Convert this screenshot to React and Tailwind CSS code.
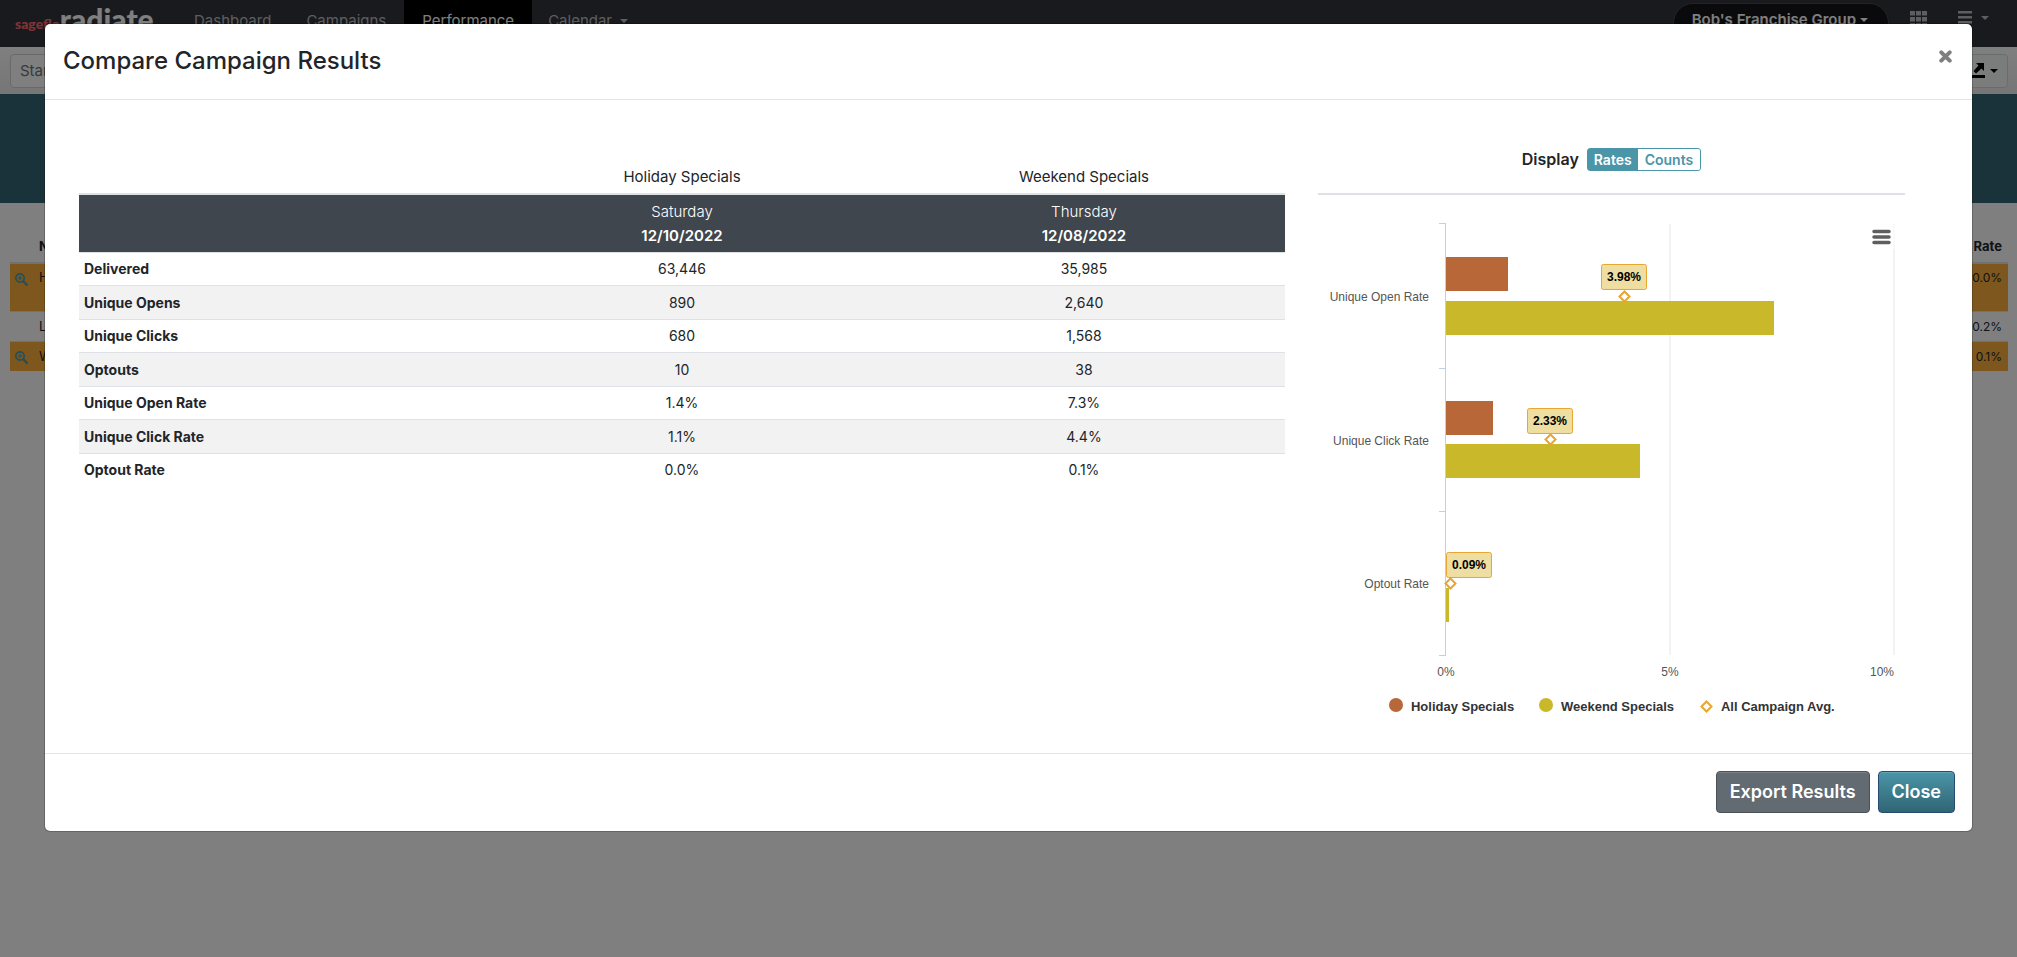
import React from "react";

const metrics = [
  ["Delivered", "63,446", "35,985"],
  ["Unique Opens", "890", "2,640"],
  ["Unique Clicks", "680", "1,568"],
  ["Optouts", "10", "38"],
  ["Unique Open Rate", "1.4%", "7.3%"],
  ["Unique Click Rate", "1.1%", "4.4%"],
  ["Optout Rate", "0.0%", "0.1%"],
];

const chartRows = [
  { label: "Unique Open Rate", labelY: 106, holiday: { y: 62, w: 62 }, weekend: { y: 106, w: 328 }, avg: { text: "3.98%", x: 306, y: 101, boxX: 283, boxY: 69 } },
  { label: "Unique Click Rate", labelY: 250, holiday: { y: 206, w: 47 }, weekend: { y: 249, w: 194 }, avg: { text: "2.33%", x: 232, y: 244, boxX: 209, boxY: 213 } },
  { label: "Optout Rate", labelY: 393, holiday: { y: 350, w: 0 }, weekend: { y: 393, w: 3 }, avg: { text: "0.09%", x: 132, y: 388, boxX: 128, boxY: 357 } },
];

function Caret({ className = "" }) {
  return (
    <svg viewBox="0 0 8 4" className={`h-1 w-2 shrink-0 ${className}`} fill="currentColor" aria-hidden="true">
      <path d="M0 0h8L4 4z" />
    </svg>
  );
}

function ZoomIcon() {
  return (
    <svg viewBox="0 0 13 13" className="size-[13px]" fill="none" stroke="#4a9fb4" aria-hidden="true">
      <circle cx="5" cy="5" r="4.200" strokeWidth="1.700" />
      <path d="M8.200 8.200l3.600 3.600" strokeWidth="2.400" strokeLinecap="round" />
      <path d="M5 2.800v4.400M2.800 5h4.400" strokeWidth="1.200" />
    </svg>
  );
}

function Navbar() {
  return (
    <header className="flex h-[47px] items-start overflow-hidden bg-[#32343b] text-base text-[#bcbdc0]">
      <a href="#home" className="flex w-[167px] shrink-0 items-start pl-[15px]">
        <span className="mt-[14px] font-[Lato] text-[14px] leading-5 font-black text-[#ff666e]">sageflo</span>
        <span className="font-[Lato] text-[30px] leading-[38px] font-black text-white">radiate</span>
      </a>
      <nav className="flex h-full items-start text-[15px] leading-[42px]">
        <a href="#dashboard" className="px-[27px]">Dashboard</a>
        <a href="#campaigns" className="px-2">Campaigns</a>
        <a href="#performance" className="ml-[10px] h-full bg-black px-[18px] text-white">Performance</a>
        <a href="#calendar" className="flex items-center gap-2 px-4">Calendar <Caret /></a>
      </nav>
      <button type="button" className="mt-[3px] ml-auto flex h-10 items-center gap-1 rounded-full border border-[#44464d] bg-[#141518] pr-5 pb-[6px] pl-[18px] text-[15px] font-semibold text-white">
        Bob's Franchise Group <Caret />
      </button>
      <button type="button" aria-label="Apps" className="mt-[11px] ml-[21px]">
        <svg viewBox="0 0 17 17" className="size-[17px]" fill="currentColor">
          {[0, 6, 12].map((x) => [0, 6, 12].map((y) => <rect key={`${x}-${y}`} x={x} y={y} width="5" height="4.500" />))}
        </svg>
      </button>
      <button type="button" aria-label="Menu" className="mt-[11px] mr-7 ml-[31px] flex items-center gap-[9px]">
        <svg viewBox="0 0 14 14" className="size-[14px]" fill="currentColor">
          <path d="M0 0h14v2.500H0zM0 5h14v2.500H0zM0 10h14v2.500H0z" />
        </svg>
        <Caret />
      </button>
    </header>
  );
}

function PageBehind() {
  return (
    <div className="flex min-h-screen flex-col bg-white">
      <Navbar />
      <div className="flex h-[47px] items-center justify-between bg-gradient-to-b from-white to-[#ececec] pr-[9px] pl-[10px]">
        <input aria-label="Start date" placeholder="Start Date" className="h-[34px] w-40 rounded border border-[#ced4da] bg-white px-[9px] text-[15px] placeholder:text-[#6c757d]" />
        <button type="button" aria-label="Share" className="flex h-[34px] items-center gap-[5px] rounded border border-[#d0dcdc] bg-[#f6f8f8] px-[9px] text-black">
          <svg viewBox="0 0 16 15" className="h-[15px] w-4" aria-hidden="true">
            <path d="M0 12h16v3H0zM7 0h8v8l-2.500-2.500-5.500 5-2.500-2.500 5-5.500z" fill="currentColor" />
          </svg>
          <Caret />
        </button>
      </div>
      <div className="h-[109px] bg-[#346674]" />
      <div className="pt-[27px] pr-[9px] pl-[10px]">
        <table className="w-full border-separate border-spacing-0 text-[13px] text-[#212529]">
          <thead>
            <tr className="h-[34px]">
              <th className="w-[29px] border-b-2 border-[#dee2e6]" />
              <th className="border-b-2 border-[#dee2e6] pt-[2px] text-left font-bold">Name</th>
              <th className="border-b-2 border-[#dee2e6] pt-[2px] pr-[6px] text-right font-bold">Optout Rate</th>
            </tr>
          </thead>
          <tbody>
            <tr className="h-[47px] bg-[#fbaf3c] align-top">
              <td className="pt-[9px] pl-[5px]"><ZoomIcon /></td>
              <td className="pt-1">Holiday Specials</td>
              <td className="pt-1 pr-[6px] text-right text-xs leading-5">0.0%</td>
            </tr>
            <tr className="h-[31px]">
              <td className="border-y border-[#dee2e6]" />
              <td className="border-y border-[#dee2e6]">Last Chance</td>
              <td className="border-y border-[#dee2e6] pr-[6px] text-right text-xs leading-5">0.2%</td>
            </tr>
            <tr className="h-[29px] bg-[#fbaf3c]">
              <td className="pt-[2px] pl-[5px]"><ZoomIcon /></td>
              <td>Weekend Specials</td>
              <td className="pr-[6px] text-right text-xs leading-5">0.1%</td>
            </tr>
          </tbody>
        </table>
      </div>
    </div>
  );
}

function ResultsTable() {
  return (
    <table className="w-full table-fixed border-separate border-spacing-0 text-[#212529]">
      <thead>
        <tr className="h-[41px] text-[15px]">
          <td />
          <th scope="col" className="pt-[10px] font-normal">Holiday Specials</th>
          <th scope="col" className="pt-[10px] font-normal">Weekend Specials</th>
        </tr>
        <tr className="h-[59px] bg-[#40464d] text-[15px] leading-6 text-white">
          <td className="border-t-2 border-[#dee2e6]" />
          <td className="border-t-2 border-[#dee2e6] text-center">
            <div className="font-light">Saturday</div>
            <div className="font-semibold">12/10/2022</div>
          </td>
          <td className="border-t-2 border-[#dee2e6] text-center">
            <div className="font-light">Thursday</div>
            <div className="font-semibold">12/08/2022</div>
          </td>
        </tr>
      </thead>
      <tbody className="text-[14px] leading-5">
        {metrics.map(([name, holiday, weekend]) => (
          <tr key={name} className="odd:h-[33px] even:h-[34px] even:bg-[#f2f2f2]">
            <th scope="row" className="border-t border-[#dee2e6] pl-[5px] text-left font-bold">{name}</th>
            <td className="border-t border-[#dee2e6] text-center">{holiday}</td>
            <td className="border-t border-[#dee2e6] text-center">{weekend}</td>
          </tr>
        ))}
      </tbody>
    </table>
  );
}

function Diamond({ x, y }) {
  return <path d={`M${x} ${y - 5}l5 5l-5 5l-5 -5z`} fill="#fff" stroke="#e8a530" strokeWidth="2" />;
}

function Chart() {
  return (
    <div className="relative">
      <svg viewBox="0 0 587 538" className="block w-full font-['Liberation_Sans',sans-serif]" role="img" aria-label="Campaign rates">
        <path d="M352 29V460M576 29V460" stroke="#e6e6e6" />
        <path d="M127.500 28.500V460.500M121 28.500h7M121 173.500h7M121 316.500h7M121 460.500h7" fill="none" stroke="#c3cfe8" />
        {chartRows.map((row) => (
          <g key={row.label}>
            <text x="111" y={row.labelY} textAnchor="end" fontSize="12" fill="#555">{row.label}</text>
            <rect x="128" y={row.holiday.y} width={row.holiday.w} height="34" fill="#b86739" />
            <rect x="128" y={row.weekend.y} width={row.weekend.w} height="34" fill="#cab82b" />
            <Diamond x={row.avg.x + 0.5} y={row.avg.y + 0.5} />
            <rect x={row.avg.boxX + 0.5} y={row.avg.boxY + 0.5} width="45" height="25" rx="2" fill="#eedea1" stroke="#e8a530" />
            <text x={row.avg.boxX + 23} y={row.avg.boxY + 17} textAnchor="middle" fontSize="12" fontWeight="bold" fill="#000">{row.avg.text}</text>
          </g>
        ))}
        <g fontSize="12" fill="#555">
          <text x="128" y="481" textAnchor="middle">0%</text>
          <text x="352" y="481" textAnchor="middle">5%</text>
          <text x="576" y="481" textAnchor="end">10%</text>
        </g>
        <g fontSize="13" fontWeight="bold" fill="#333">
          <circle cx="78" cy="510" r="7" fill="#b86739" />
          <text x="93" y="516">Holiday Specials</text>
          <circle cx="228" cy="510" r="7" fill="#cab82b" />
          <text x="243" y="516">Weekend Specials</text>
          <Diamond x={388.5} y={511.5} />
          <text x="403" y="516">All Campaign Avg.</text>
        </g>
      </svg>
      <button type="button" aria-label="Chart menu" className="absolute top-[30px] right-[9px] flex h-6 w-7 items-center justify-center bg-white/60">
        <svg viewBox="0 0 19 16" className="h-4 w-[19px]" fill="none" stroke="#5f5f5f" strokeWidth="3.500" strokeLinecap="round" aria-hidden="true">
          <path d="M2 2.500h15M2 8h15M2 13.500h15" />
        </svg>
      </button>
    </div>
  );
}

export default function App() {
  return (
    <div className="relative font-[Inter,'Liberation_Sans',sans-serif]">
      <PageBehind />
      <div className="absolute inset-0 bg-black/50 px-11 pt-[23px]">
        <section role="dialog" aria-modal="true" aria-labelledby="compare-title" className="rounded-md border border-black/20 bg-white bg-clip-padding text-[#212529]">
          <div className="flex h-[76px] items-start justify-between border-b border-[#e5e5e5] px-[18px]">
            <h1 id="compare-title" className="pt-[19px] text-[24px] leading-9 font-medium">Compare Campaign Results</h1>
            <button type="button" aria-label="Dismiss" className="mt-[26px] mr-[2px]">
              <svg viewBox="0 0 13 13" className="size-[13px]" stroke="#7f7f7f" strokeWidth="4" strokeLinecap="round" aria-hidden="true">
                <path d="M2.300 2.300l8.400 8.400M10.700 2.300l-8.400 8.400" />
              </svg>
            </button>
          </div>
          <div className="flex items-start pt-[52px] pr-[51px] pb-5 pl-[19px]">
            <div className="w-2/3 pr-[17px] pl-[15px]">
              <ResultsTable />
            </div>
            <div className="w-1/3 px-4">
              <div className="flex h-[43px] items-start justify-center gap-2 border-b-2 border-[#dee2e6] text-base font-semibold" role="group" aria-labelledby="display-label">
                <span id="display-label" className="-mt-1 leading-[23px]">Display</span>
                <div className="-mt-1 flex h-[23px] rounded-[3px] border border-[#4a95a8] text-[14px]">
                  <button type="button" aria-pressed="true" className="bg-[#4a95a8] px-[6px] text-white">Rates</button>
                  <button type="button" aria-pressed="false" className="rounded-r-[3px] bg-white px-[7px] text-[#4a95a8]">Counts</button>
                </div>
              </div>
              <Chart />
            </div>
          </div>
          <div className="flex justify-end gap-2 border-t border-[#e5e5e5] px-[17px] pt-[17px] pb-[18px] text-[18px] font-semibold text-white">
            <button type="button" className="h-[42px] rounded border border-[#4b5158] bg-[#626a72] px-[13px] shadow-[inset_0_1px_0_rgba(255,255,255,0.15)]">Export Results</button>
            <button type="button" className="h-[42px] rounded border border-[#264a72] bg-gradient-to-b from-[#4a95a8] to-[#306674] px-[13px] shadow-[inset_0_1px_0_rgba(255,255,255,0.15)]">Close</button>
          </div>
        </section>
      </div>
    </div>
  );
}
